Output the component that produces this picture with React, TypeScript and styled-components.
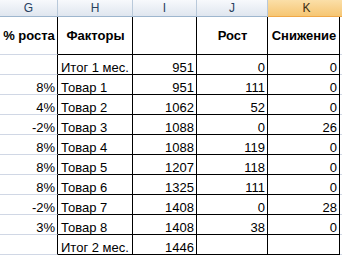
import { Fragment } from "react";
import styled, { createGlobalStyle } from "styled-components";

const GlobalStyle = createGlobalStyle`
  html, body {
    margin: 0;
    padding: 0;
    background: #ffffff;
    overflow: hidden;
  }
`;

const GRID = "#d0d7e5";
const BLACK = "#000000";

const Sheet = styled("div")`
  display: grid;
  grid-template-columns: 58px 75px 64px 71px 72px 1fr;
  grid-template-rows: 17px 38px repeat(10, 20px);
  width: 342px;
  height: 256px;
  font-family: "Liberation Sans", Arial, sans-serif;
  font-size: 13px;
  color: #000;
  overflow: hidden;
`;

const ColHeader = styled("div").withConfig({
  shouldForwardProp: (prop) => !["active", "span"].includes(prop),
})<{ active?: boolean; span?: number }>`
  grid-column: span ${(props) => props.span || 1};
  box-sizing: border-box;
  display: flex;
  align-items: center;
  justify-content: center;
  font-size: 12px;
  color: ${(props) => (props.active ? "#3b2e12" : "#27415f")};
  background: ${(props) =>
    props.active
      ? "linear-gradient(#fbdfa8, #f6c673)"
      : "linear-gradient(#f7f9fc, #dfe6ef)"};
  border-right: 1px solid ${(props) => (props.active ? "#f2b65f" : "#b9c9da")};
  border-bottom: 1px solid ${(props) => (props.active ? "#f0a848" : "#9eb6ce")};
`;

const Cell = styled("div").withConfig({
  shouldForwardProp: (prop) => !["align", "boxed", "bold", "head", "edge"].includes(prop),
})<{ align?: "left" | "right" | "center"; boxed?: boolean; bold?: boolean; head?: boolean; edge?: boolean }>`
  box-sizing: border-box;
  display: flex;
  align-items: ${(props) => (props.head ? "center" : "flex-end")};
  justify-content: ${(props) =>
    props.align === "right" ? "flex-end" : props.align === "center" ? "center" : "flex-start"};
  padding: 0 2px 0 3px;
  line-height: 13px;
  font-weight: ${(props) => (props.bold ? "bold" : "normal")};
  white-space: nowrap;
  overflow: hidden;
  border-bottom: 1px solid ${(props) => (props.boxed ? BLACK : GRID)};
  border-right: 1px solid ${(props) => (props.boxed || props.edge ? BLACK : "transparent")};
`;

type Row = [string, string, string, string, string];

const rows: Row[] = [
  ["", "Итог 1 мес.", "951", "0", "0"],
  ["8%", "Товар 1", "951", "111", "0"],
  ["4%", "Товар 2", "1062", "52", "0"],
  ["-2%", "Товар 3", "1088", "0", "26"],
  ["8%", "Товар 4", "1088", "119", "0"],
  ["8%", "Товар 5", "1207", "118", "0"],
  ["8%", "Товар 6", "1325", "111", "0"],
  ["-2%", "Товар 7", "1408", "0", "28"],
  ["3%", "Товар 8", "1408", "38", "0"],
  ["", "Итог 2 мес.", "1446", "", ""],
];

const App = () => {
  return (
    <>
      <GlobalStyle />
      <Sheet>
        <ColHeader>G</ColHeader>
        <ColHeader>H</ColHeader>
        <ColHeader>I</ColHeader>
        <ColHeader>J</ColHeader>
        <ColHeader active span={2}>
          K
        </ColHeader>

        <Cell head bold align="center" edge>
          % роста
        </Cell>
        <Cell head bold align="center" boxed>
          Факторы
        </Cell>
        <Cell head boxed />
        <Cell head bold align="center" boxed>
          Рост
        </Cell>
        <Cell head bold align="center" boxed>
          Снижение
        </Cell>
        <Cell head />

        {rows.map((r, i) => (
          <Fragment key={i}>
            <Cell align="right" edge>
              {r[0]}
            </Cell>
            <Cell boxed>{r[1]}</Cell>
            <Cell align="right" boxed>
              {r[2]}
            </Cell>
            <Cell align="right" boxed>
              {r[3]}
            </Cell>
            <Cell align="right" boxed>
              {r[4]}
            </Cell>
            <Cell />
          </Fragment>
        ))}
      </Sheet>
    </>
  );
};

export default App;
